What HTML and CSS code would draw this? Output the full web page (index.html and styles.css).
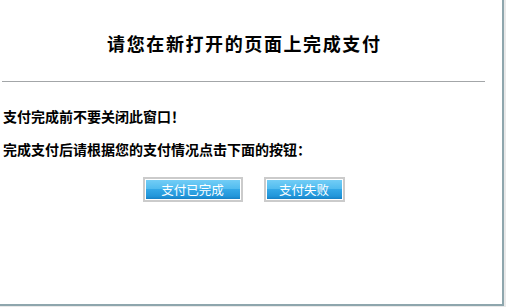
FILE: index.html
```html
<!DOCTYPE html>
<html lang="zh-CN">
<head>
<meta charset="utf-8">
<title>支付</title>
<link rel="stylesheet" href="styles.css">
</head>
<body>
<div class="window">
  <div class="content">
    <h1 class="title">请您在新打开的页面上完成支付</h1>
    <div class="rule"></div>
    <p class="note">支付完成前不要关闭此窗口！</p>
    <p class="note second">完成支付后请根据您的支付情况点击下面的按钮：</p>
    <div class="actions">
      <span class="btn-wrap wide"><button class="btn" type="button">支付已完成</button></span>
      <span class="btn-wrap narrow"><button class="btn" type="button">支付失败</button></span>
    </div>
  </div>
</div>
</body>
</html>
```
FILE: styles.css
```css
html, body {
  margin: 0;
  padding: 0;
}
body {
  background: #e9e9e9;
  font-family: "Noto Sans CJK SC", "Noto Sans", sans-serif;
  color: #000;
}
.window {
  width: 502px;
  height: 304px;
  background: #fff;
  border-right: 2px solid #8ea6ad;
  border-bottom: 2px solid #8ea6ad;
  overflow: hidden;
}
.content {
  width: 483px;
  margin-left: 2px;
}
.title {
  margin: 0;
  padding-top: 33px;
  font-size: 18px;
  line-height: 20px;
  font-weight: bold;
  letter-spacing: 1.6px;
  text-indent: 1.6px;
  text-align: center;
}
.rule {
  height: 1px;
  background: #a3a6a8;
  margin-top: 28px;
}
.note {
  margin: 26px 0 0 1px;
  font-size: 14px;
  line-height: 16px;
  font-weight: bold;
}
.note.second {
  margin-top: 17px;
}
.actions {
  display: flex;
  justify-content: center;
  gap: 21px;
  margin-top: 20px;
}
.btn-wrap {
  display: block;
  border: 2px solid #cbcbcb;
  padding: 1px;
  background: #fff;
}
.btn {
  display: block;
  height: 19px;
  margin: 0;
  padding: 0;
  border: 0;
  color: #fff;
  font-family: "Noto Sans CJK SC", "Noto Sans", sans-serif;
  font-size: 12.5px;
  line-height: 19px;
  text-align: center;
  background: linear-gradient(to bottom, #72cdf6 0%, #52bcef 45%, #33a7e6 50%, #2296da 85%, #1680c4 100%);
}
.wide .btn {
  width: 94px;
}
.narrow .btn {
  width: 75px;
}
```
